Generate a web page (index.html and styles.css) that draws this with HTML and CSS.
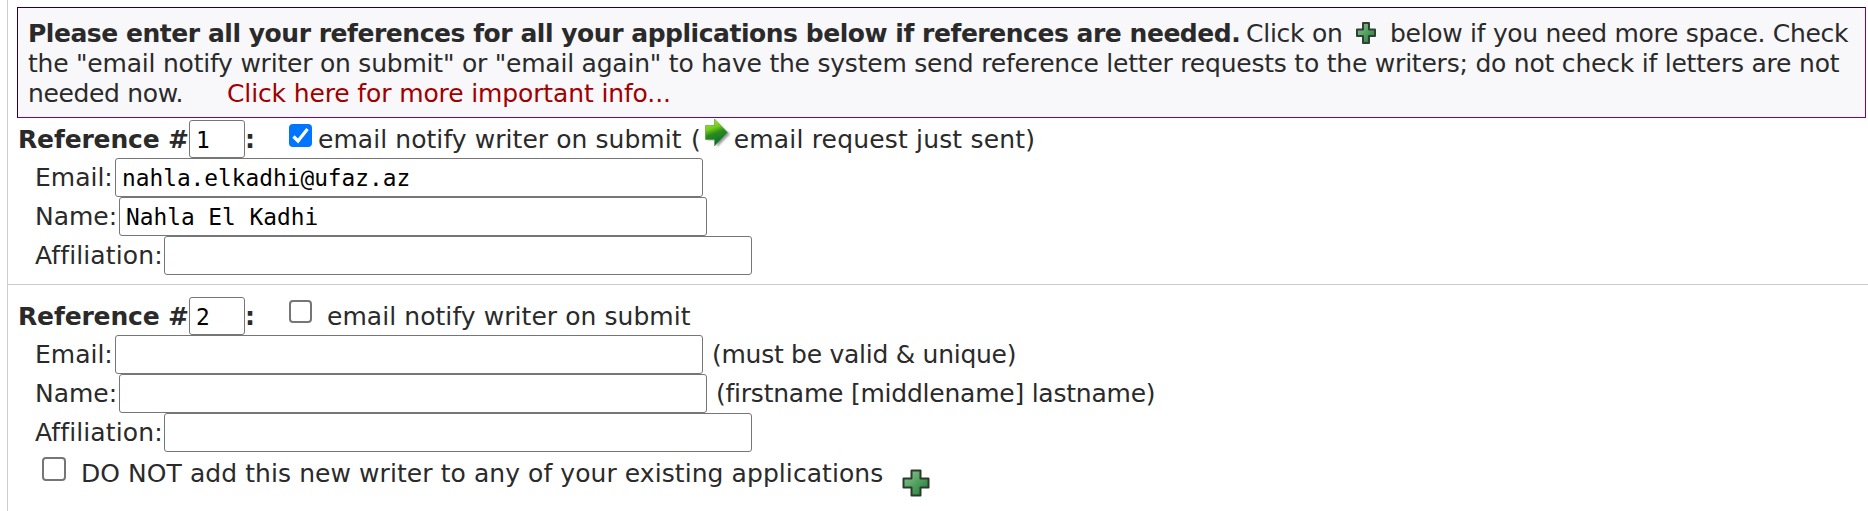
FILE: index.html
```
<!DOCTYPE html>
<html lang="en">
<head>
<meta charset="utf-8">
<title>References</title>
<link rel="stylesheet" href="styles.css">
</head>
<body>
<svg class="defs" width="0" height="0">
  <defs>
    <linearGradient id="green" x1="0" y1="0" x2="1" y2="1">
      <stop offset="0" stop-color="#8fc795"/><stop offset="1" stop-color="#187a2c"/>
    </linearGradient>
    <linearGradient id="lime" x1="0" y1="0" x2="0.3" y2="1">
      <stop offset="0" stop-color="#b4e84c"/><stop offset="0.4" stop-color="#74cc1c"/><stop offset="0.6" stop-color="#2c8c1c"/><stop offset="1" stop-color="#0c6a3a"/>
    </linearGradient>
    <filter id="soft" x="-20%" y="-20%" width="140%" height="140%"><feGaussianBlur stdDeviation="1"/></filter>
    <symbol id="plus" viewBox="0 0 28 28">
      <path d="M9.500 1.500h9v8h8v9h-8v8h-9v-8h-8v-9h8z" fill="url(#green)" stroke="#2b3a2e" stroke-width="2" stroke-linejoin="round"/>
    </symbol>
  </defs>
</svg>
<main class="panel">
  <section class="notice">
    <div class="line"><b class="t n1">Please enter all your references for all your applications below if references are needed.</b><span class="t n2">Click on</span><svg class="plus-small" viewBox="0 0 20 22"><path d="M7 1h6v6.500h6v6.500h-6v7h-6v-7h-6v-6.500h6z" fill="url(#green)" stroke="#33403a" stroke-width="2" stroke-linejoin="round"/></svg><span class="t n3">below if you need more space. Check</span></div>
    <div class="line"><span class="t n4">the "email notify writer on submit" or "email again" to have the system send reference letter requests to the writers; do not check if letters are not</span></div>
    <div class="line"><span class="t n5">needed now.</span><a class="t n6">Click here for more important info...</a></div>
  </section>
  <section class="reference first">
    <div class="head"><b class="t h1">Reference #</b><input class="num" value="1"><b class="t colon">:</b><span class="check checked"><svg viewBox="0 0 23 23"><path d="M4.500 12.500l4.500 4.500L18.500 5" fill="none" stroke="#fff" stroke-width="3.200"/></svg></span><span class="t h2">email notify writer on submit</span><span class="t paren">(</span><svg class="arrow" viewBox="0 0 28 30"><path d="M3 11h9V4l14 12-13 13v-7H3z" fill="#000" opacity=".4" filter="url(#soft)"/><path d="M1.500 7.500h9V1l13 13.500L10.500 28v-6.500h-9z" fill="url(#lime)" stroke="#4c9c2c" stroke-width=".6"/></svg><span class="t h3">email request just sent)</span></div>
    <div class="row"><label class="t email">Email:</label><input class="field" value="nahla.elkadhi@ufaz.az"></div>
    <div class="row"><label class="t name">Name:</label><input class="field" value="Nahla El Kadhi"></div>
    <div class="row"><label class="t aff">Affiliation:</label><input class="field"></div>
  </section>
  <section class="reference second">
    <div class="head"><b class="t h1">Reference #</b><input class="num" value="2"><b class="t colon">:</b><span class="check"></span><span class="t h2 spaced">email notify writer on submit</span></div>
    <div class="row"><label class="t email">Email:</label><input class="field"><span class="t hint1">(must be valid &amp; unique)</span></div>
    <div class="row"><label class="t name">Name:</label><input class="field"><span class="t hint2">(firstname [middlename] lastname)</span></div>
    <div class="row"><label class="t aff">Affiliation:</label><input class="field"></div>
    <div class="optout"><span class="check big"></span><span class="t opt">DO NOT add this new writer to any of your existing applications</span><svg class="plus-large"><use href="#plus"/></svg></div>
  </section>
</main>
</body>
</html>
```
FILE: styles.css
```
* { box-sizing: border-box; }
body { margin: 0; background: #fff; color: #2a2a2a; font: 25px/30px "DejaVu Sans", Verdana, sans-serif; font-variant-ligatures: none; overflow: hidden; }
.defs { position: absolute; }
.panel { margin-left: 7px; height: 511px; border-left: 1px solid #ccc; padding-top: 7px; }
.t { flex: none; white-space: pre; }
.notice { margin: 0 2px 0 9px; height: 111px; padding: 11px 0 0 10px; background: #f8f8fb; border: 1px solid; border-color: #2b002b #800080 #800080 #2b002b; }
.line { display: flex; height: 30px; }
.n1 { width: 1218px; letter-spacing: -0.465px; }
.n2 { width: 110px; letter-spacing: -0.25px; }
.plus-small { width: 20px; height: 22px; margin-top: 3px; margin-right: 14px; flex: none; }
.n3 { letter-spacing: -0.3px; }
.n4 { letter-spacing: -0.22px; }
.n5 { width: 199px; letter-spacing: -0.35px; }
.n6 { color: #a00000; letter-spacing: -0.13px; }
.reference.first { padding: 2px 0 9px 10px; }
.reference.second { padding: 12px 0 0 10px; border-top: 1px solid #ccc; }
.head { display: flex; height: 38px; line-height: 39px; }
.h1 { width: 171px; letter-spacing: -0.15px; }
.h2 { width: 373px; letter-spacing: 0.06px; }
.h3 { letter-spacing: 0.17px; }
.num, .field { margin: 0; flex: none; border: 1px solid #767676; border-radius: 3px; background: #fff; color: #000; font: 22.8px "DejaVu Sans Mono", Consolas, monospace; padding: 1px 6px 0; }
.num { width: 56px; height: 38px; }
.colon { width: 44px; }
.check { flex: none; width: 23px; height: 23px; margin: 3px 6px 0 0; border: 2px solid #767676; border-radius: 4px; background: #fff; }
.checked { margin-top: 4px; border: 0; background: #0075ff; }
.checked svg { display: block; width: 23px; height: 23px; }
.spaced { margin-left: 9px; }
.arrow { width: 28px; height: 30px; flex: none; margin: -2px 2px 0 3px; }
.row { display: flex; height: 39px; line-height: 39px; padding-left: 17px; }
.field { width: 588px; height: 39px; }
.email { width: 80px; }
.name { width: 84px; }
.aff { width: 129px; letter-spacing: 0.12px; }
.hint1, .hint2 { margin-left: 9px; }
.hint1 { letter-spacing: -0.27px; }
.hint2 { letter-spacing: -0.23px; }
.optout { display: flex; height: 46px; line-height: 43px; padding-left: 24px; }
.opt { letter-spacing: 0.07px; }
.big { width: 24px; height: 24px; margin: 5px 15px 0 0; }
.plus-large { width: 28px; height: 28px; margin: 17px 0 0 19px; flex: none; }
```
